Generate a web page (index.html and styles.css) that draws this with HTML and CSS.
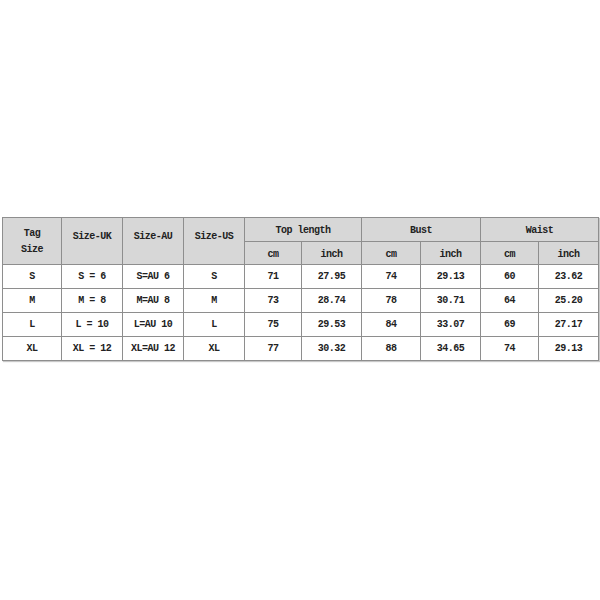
FILE: index.html
```html
<!DOCTYPE html>
<html>
<head>
<meta charset="utf-8">
<link rel="stylesheet" href="styles.css">
</head>
<body>
<div class="page">
<table class="size-table">
  <colgroup>
    <col class="c1"><col class="c2"><col class="c3"><col class="c4">
    <col class="c5"><col class="c6"><col class="c7"><col class="c8">
    <col class="c9"><col class="c10">
  </colgroup>
  <thead>
    <tr class="h1">
      <th rowspan="2" class="tall">Tag<br>Size</th>
      <th rowspan="2" class="tall single">Size-UK</th>
      <th rowspan="2" class="tall single">Size-AU</th>
      <th rowspan="2" class="tall single">Size-US</th>
      <th colspan="2">Top length</th>
      <th colspan="2">Bust</th>
      <th colspan="2">Waist</th>
    </tr>
    <tr class="h2">
      <th>cm</th><th>inch</th>
      <th>cm</th><th>inch</th>
      <th>cm</th><th>inch</th>
    </tr>
  </thead>
  <tbody>
    <tr><td>S</td><td>S = 6</td><td>S=AU 6</td><td>S</td><td>71</td><td>27.95</td><td>74</td><td>29.13</td><td>60</td><td>23.62</td></tr>
    <tr><td>M</td><td>M = 8</td><td>M=AU 8</td><td>M</td><td>73</td><td>28.74</td><td>78</td><td>30.71</td><td>64</td><td>25.20</td></tr>
    <tr><td>L</td><td>L = 10</td><td>L=AU 10</td><td>L</td><td>75</td><td>29.53</td><td>84</td><td>33.07</td><td>69</td><td>27.17</td></tr>
    <tr><td>XL</td><td>XL = 12</td><td>XL=AU 12</td><td>XL</td><td>77</td><td>30.32</td><td>88</td><td>34.65</td><td>74</td><td>29.13</td></tr>
  </tbody>
</table>
</div>
</body>
</html>
```

FILE: styles.css
```css
html, body {
  margin: 0;
  padding: 0;
  background: #ffffff;
}
.page {
  width: 600px;
  height: 600px;
  padding-top: 217px;
  padding-left: 2px;
  box-sizing: border-box;
}
.size-table {
  border-collapse: collapse;
  table-layout: fixed;
  width: 597px;
  font-family: "Liberation Mono", "DejaVu Sans Mono", monospace;
  font-size: 10px;
  font-weight: bold;
  letter-spacing: -0.5px;
  color: #222222;
  box-shadow: 1px 1px 1px #c8c8c8;
}
.c1 { width: 59px; }
.c2 { width: 61px; }
.c3 { width: 61px; }
.c4 { width: 61px; }
.c5 { width: 57px; }
.c6 { width: 60px; }
.c7 { width: 59px; }
.c8 { width: 60px; }
.c9 { width: 58px; }
.c10 { width: 60px; }
.size-table th,
.size-table td {
  border: 1px solid #8e8e8e;
  text-align: center;
  vertical-align: middle;
  padding: 0;
  line-height: 16px;
}
.size-table th {
  background: #d7d7d7;
  font-weight: bold;
}
.h1 th { height: 20px; padding-top: 3px; }
.h2 th { height: 19px; padding-top: 3px; }
.h1 th.tall { height: 20px; padding-top: 1px; padding-bottom: 0; }
.h1 th.single { padding-top: 0; padding-bottom: 9px; }
.size-table td { height: 22px; padding-top: 1px; }
```
